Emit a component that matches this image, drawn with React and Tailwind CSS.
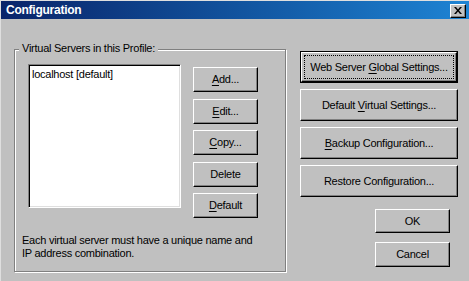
import { Fragment } from "react";

const font = "font-['Liberation_Sans',Arial,sans-serif] text-[11px] tracking-[-0.25px] text-black";

const raised =
  "border border-t-white border-l-white border-r-black border-b-black shadow-[inset_-1px_-1px_0_#808080]";

const small = [
  { label: "Add...", key: 0, mt: "mt-0" },
  { label: "Edit...", key: 0, mt: "mt-[7px]" },
  { label: "Copy...", key: 0, mt: "mt-[6px]" },
  { label: "Delete", key: -1, mt: "mt-[7px]" },
  { label: "Default", key: 0, mt: "mt-[6px]" },
];

const big = [
  { label: "Web Server Global Settings...", key: 11, def: true },
  { label: "Default Virtual Settings...", key: 8 },
  { label: "Backup Configuration...", key: 0 },
  { label: "Restore Configuration...", key: -1 },
];

function Label({ text, k }) {
  if (k < 0) return <span>{text}</span>;
  return (
    <span>
      {text.slice(0, k)}
      <span className="underline underline-offset-[2px] decoration-1">{text[k]}</span>
      {text.slice(k + 1)}
    </span>
  );
}

function Button({ label, k, className = "" }) {
  return (
    <button
      className={`${raised} ${font} bg-[#c0c0c0] flex items-center justify-center leading-none ${className}`}
    >
      <Label text={label} k={k} />
    </button>
  );
}

function DefaultButton({ label, k }) {
  return (
    <button className={`border border-black bg-[#c0c0c0] h-[32px] w-full p-0 ${font}`}>
      <div className={`${raised} h-full w-full flex p-[2px]`}>
        <div className="flex-1 border border-dotted border-black flex items-center justify-center leading-none">
          <Label text={label} k={k} />
        </div>
      </div>
    </button>
  );
}

export default function App() {
  return (
    <div className="w-[469px] h-[281px] bg-[#c0c0c0] pl-[1px] pt-[1px] overflow-hidden border-t border-l border-[#dfdfdf]">
      {/* title bar */}
      <div className="h-[18px] -mt-[1px] -ml-[1px] pl-[1px] bg-gradient-to-r from-[#0a246a] to-[#1e84d4] flex items-center justify-between pr-[3px]">
        <span className="pl-[4px] font-['Liberation_Sans',Arial,sans-serif] text-[12px] font-bold tracking-[-0.25px] text-white leading-[18px]">
          Configuration
        </span>
        <div className={`${raised} bg-[#c0c0c0] w-[16px] h-[14px] flex items-center justify-center mt-[1px]`}>
          <svg width="8" height="7" viewBox="0 0 8 7" className="mb-[1px]">
            <path d="M0 0h2l2 2.5L6 0h2L5 3.5 8 7H6L4 4.5 2 7H0l3-3.5z" fill="#000" />
          </svg>
        </div>
      </div>

      <div className="flex items-start pl-[12px] pt-[30px]">
        {/* group box */}
        <div className="relative w-[272px] h-[223px] border border-[#808080] shadow-[inset_1px_1px_0_#fff,1px_1px_0_#fff] pl-[7px] pt-[14px]">
          <span className={`absolute -top-[8px] left-[4px] px-[3px] bg-[#c0c0c0] leading-[13px] ${font}`}>
            Virtual Servers in this Profile:
          </span>
          <div className="flex items-start">
            <div className="ml-[6px] w-[153px] h-[144px] bg-white border border-t-[#808080] border-l-[#808080] border-r-white border-b-white shadow-[inset_1px_1px_0_#000,inset_-1px_-1px_0_#dfdfdf] pl-[3px] pt-[3px]">
              <div className={`${font} leading-[13px] whitespace-nowrap`}>localhost [default]</div>
            </div>
            <div className="ml-[12px] pt-[3px] w-[65px] flex flex-col">
              {small.map((b) => (
                <Button key={b.label} label={b.label} k={b.key} className={`h-[25px] w-full ${b.mt}`} />
              ))}
            </div>
          </div>
          <p className={`${font} leading-[13px] mt-[16px] whitespace-nowrap`}>
            Each virtual server must have a unique name and
            <br />
            IP address combination.
          </p>
        </div>

        {/* right column */}
        <div className="ml-[14px] mt-[2px] w-[158px] flex flex-col">
          <div className="flex flex-col gap-[6px]">
            {big.map((b) =>
              b.def ? (
                <DefaultButton key={b.label} label={b.label} k={b.key} />
              ) : (
                <Button key={b.label} label={b.label} k={b.key} className="h-[32px] w-full" />
              )
            )}
          </div>
          <div className="flex flex-col items-end pr-[8px] mt-[12px] gap-[9px]">
            <Button label="OK" k={-1} className="h-[24px] w-[75px]" />
            <Button label="Cancel" k={-1} className="h-[25px] w-[75px]" />
          </div>
        </div>
      </div>
    </div>
  );
}
